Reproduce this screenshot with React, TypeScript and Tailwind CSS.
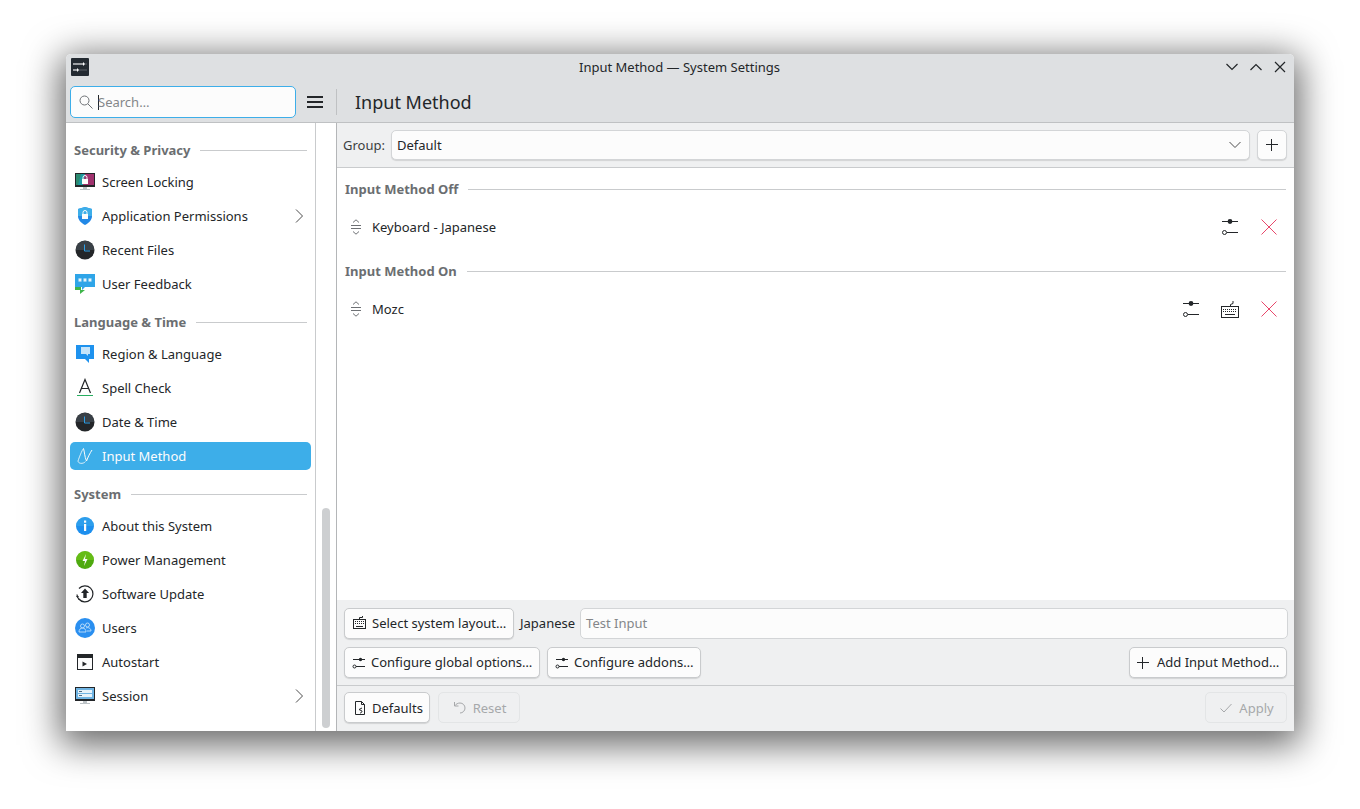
import type { ReactNode } from "react";

function Chevron() {
  return (
    <svg width="16" height="16" viewBox="0 0 16 16" className="text-[#4d4d4d]">
      <path d="M5 1.500 11.500 8 5 14.500" fill="none" stroke="currentColor" />
    </svg>
  );
}

function ClockIcon() {
  return (
    <svg width="20" height="20" viewBox="0 0 20 20">
      <circle cx="10" cy="10" r="9.500" fill="#232629" />
      <path d="M.8 10a9.200 9.200 0 0 1 18.400 0" fill="#4d5560" opacity=".55" />
      <path d="M9.500 4.500v6.500H15" fill="none" stroke="#2e9fe6" strokeWidth="1" />
    </svg>
  );
}

function Monitor({ children }: { children: ReactNode }) {
  return (
    <svg width="20" height="20" viewBox="0 0 20 20">
      <g transform="translate(0 1)">
        <rect x="0" y="0" width="20" height="14" fill="#232629" />
        {children}
        <rect x="8" y="14" width="4" height="2" fill="#bdc3c7" />
        <rect x="5" y="16" width="10" height="1" fill="#bdc3c7" />
      </g>
    </svg>
  );
}

function ScreenLockIcon() {
  return (
    <Monitor>
      <rect x="1" y="1" width="18" height="11" fill="#1d99a0" />
      <path d="M10 1h9v11H8z" fill="#a0326e" />
      <path d="M1 1h5l-3 11H1z" fill="#2a8a70" />
      <rect x="7" y="6" width="6" height="5" fill="#fcfcfc" />
      <path d="M8 6V4.500a2 2 0 0 1 4 0V6" fill="none" stroke="#fcfcfc" />
    </Monitor>
  );
}

function ShieldIcon() {
  return (
    <svg width="20" height="20" viewBox="0 0 20 20">
      <path d="M10 1 3 3v7c0 4 3 7 7 9 4-2 7-5 7-9V3z" fill="#2288e6" />
      <path d="M10 1 3 3v7h14V3z" fill="#3daee9" />
      <rect x="7" y="8" width="6" height="5" fill="#fcfcfc" />
      <path d="M8 8V6.500a2 2 0 0 1 4 0V8" fill="none" stroke="#fcfcfc" />
    </svg>
  );
}

function FeedbackIcon() {
  return (
    <svg width="20" height="20" viewBox="0 0 20 20">
      <path d="M0 3h6v13h4l-5 4v-4H0z" fill="#3fb54a" />
      <path d="M0 0h20v13H10l-3 3v-3H0z" fill="#2fa5e8" />
      <path d="M5 4v4M3.300 5l3.400 2M3.300 7l3.400-2M10 4v4M8.300 5l3.400 2M8.300 7l3.400-2M15 4v4M13.300 5l3.400 2M13.300 7l3.400-2" stroke="#fcfcfc" fill="none" />
    </svg>
  );
}

function RegionIcon() {
  return (
    <svg width="20" height="20" viewBox="0 0 20 20">
      <path d="M1 1h18v14h-5v4l-4-4H1z" fill="#1e92ee" />
      <path d="M6 3h9v7h-2v2l-2-2H6z" fill="#c5e4fa" />
    </svg>
  );
}

function SpellIcon() {
  return (
    <svg width="20" height="20" viewBox="0 0 20 20">
      <path d="M4.500 15 10 1.500 15.500 15M6.500 10.500h7" fill="none" stroke="#232629" strokeWidth="1.200" />
      <rect x="2" y="17" width="16" height="1" fill="#27ae60" />
    </svg>
  );
}

function InputMethodIcon() {
  return (
    <svg width="20" height="20" viewBox="0 0 20 20" fill="none" stroke="#fcfcfc" strokeWidth="1">
      <path d="M8.500 2.500C7 4 4 12 3 15c0 2.500 5 3.500 7.500.5" opacity=".8" />
      <path d="M8.500 2.500c1 3 1 8 3 12.500M17 4c-2 3-4 7-5.500 11" />
    </svg>
  );
}

function InfoIcon() {
  return (
    <svg width="20" height="20" viewBox="0 0 20 20">
      <circle cx="10" cy="10" r="9" fill="#1d8fee" />
      <path d="M1 10a9 9 0 0 1 18 0" fill="#3daee9" opacity=".5" />
      <rect x="9" y="8" width="2.200" height="7" fill="#fcfcfc" />
      <rect x="9" y="4.500" width="2.200" height="2.200" fill="#fcfcfc" />
    </svg>
  );
}

function PowerIcon() {
  return (
    <svg width="20" height="20" viewBox="0 0 20 20">
      <circle cx="10" cy="10" r="9" fill="#4ea90f" />
      <path d="M1 10a9 9 0 0 1 18 0" fill="#7ccf1e" opacity=".5" />
      <path d="M11 4 7.500 11H10l-1 5 3.500-7H10z" fill="#fcfcfc" />
    </svg>
  );
}

function UpdateIcon() {
  return (
    <svg width="20" height="20" viewBox="0 0 20 20">
      <path d="M4 4.500A8 8 0 1 1 3.800 15" fill="none" stroke="#232629" strokeWidth="1.200" />
      <path d="M2 10.500a8 8 0 0 0 2 5" fill="none" stroke="#232629" strokeWidth="1.200" />
      <path d="M1 12h3l-1.500 2z" fill="#232629" />
      <path d="M10 4.500 14 9h-2.300v5H8.300V9H6z" fill="#232629" />
    </svg>
  );
}

function UsersIcon() {
  return (
    <svg width="20" height="20" viewBox="0 0 20 20">
      <circle cx="10" cy="10" r="10" fill="#2a8ff0" />
      <g fill="none" stroke="#bfe0fb" strokeWidth=".9">
        <circle cx="7.500" cy="8" r="2" />
        <circle cx="12.500" cy="7" r="2" />
        <path d="M4 14c0-2.500 1.500-4 3.500-4S11 11.500 11 14z" />
        <path d="M11 10c2-1 5 0 5 3h-4" />
      </g>
    </svg>
  );
}

function AutostartIcon() {
  return (
    <svg width="20" height="20" viewBox="0 0 20 20">
      <rect x="2.500" y="2.500" width="15" height="15" fill="#fcfcfc" stroke="#232629" />
      <rect x="2" y="2" width="16" height="4" fill="#232629" />
      <path d="M7.500 9.500v5l4.500-2.500z" fill="#232629" />
    </svg>
  );
}

function SessionIcon() {
  return (
    <Monitor>
      <rect x="1" y="1" width="18" height="11" fill="#6fb4e3" />
      <rect x="3" y="3" width="14" height="3" fill="#e6f2fa" />
      <rect x="3" y="7" width="14" height="3" fill="#e6f2fa" />
      <rect x="4" y="4" width="3" height="1" fill="#4d6a80" />
      <rect x="4" y="8" width="3" height="1" fill="#4d6a80" />
    </Monitor>
  );
}

function KeyboardIcon() {
  return (
    <svg width="18" height="18" viewBox="0 0 18 18" fill="none" stroke="#232629">
      <path d="M9.500 6V4.500l2.500-1V1" />
      <rect x=".5" y="6.500" width="17" height="11" />
      <path d="M2 9.500h14M2 11.500h14" strokeDasharray="1 1" />
      <path d="M4 14.500h10" />
    </svg>
  );
}

function KeyboardSmall() {
  return (
    <svg width="15" height="15" viewBox="0 0 15 15" fill="none" stroke="#232629">
      <path d="M7.500 3V1.500h3V0" />
      <rect x="1.500" y="3.500" width="12" height="9" />
      <path d="M3 5.500h9M3 7.500h9" strokeDasharray="1 1" />
      <path d="M4 10.500h7" />
    </svg>
  );
}

function SlidersIcon() {
  return (
    <svg width="16" height="16" viewBox="0 0 16 16" fill="none" stroke="#232629">
      <path d="M0 2.500h16M5 13.500h11" />
      <circle cx="8" cy="2.500" r="2.400" fill="#232629" stroke="none" />
      <circle cx="2.500" cy="13.500" r="2" fill="#fcfcfc" />
    </svg>
  );
}

function SmallSliders() {
  return (
    <svg width="16" height="16" viewBox="0 0 16 16" fill="none" stroke="#232629">
      <path d="M2 4.500h12M5 11.500h9" />
      <circle cx="9.500" cy="4.500" r="1.700" fill="#232629" stroke="none" />
      <circle cx="3.500" cy="11.500" r="1.500" fill="#fcfcfc" />
    </svg>
  );
}

function RemoveIcon() {
  return (
    <svg width="16" height="16" viewBox="0 0 16 16">
      <path d="M.5.500l15 15M15.500.500l-15 15" fill="none" stroke="#e8476a" />
    </svg>
  );
}

function DragHandle() {
  return (
    <svg width="12" height="16" viewBox="0 0 12 16" fill="none" stroke="#6e7175">
      <path d="M3 3.500 6 .8l3 2.700M1 6.500h10M1 9.500h10M3 12.500l3 2.700 3-2.700" />
    </svg>
  );
}

function PlusIcon() {
  return (
    <svg width="12" height="12" viewBox="0 0 12 12">
      <path d="M5.500 0v12M0 5.500h12" stroke="#232629" fill="none" />
    </svg>
  );
}

type Item = { label: string; icon: ReactNode; arrow?: boolean; active?: boolean };

const sections: { title: string; items: Item[] }[] = [
  {
    title: "Security & Privacy",
    items: [
      { label: "Screen Locking", icon: <ScreenLockIcon /> },
      { label: "Application Permissions", icon: <ShieldIcon />, arrow: true },
      { label: "Recent Files", icon: <ClockIcon /> },
      { label: "User Feedback", icon: <FeedbackIcon /> },
    ],
  },
  {
    title: "Language & Time",
    items: [
      { label: "Region & Language", icon: <RegionIcon /> },
      { label: "Spell Check", icon: <SpellIcon /> },
      { label: "Date & Time", icon: <ClockIcon /> },
      { label: "Input Method", icon: <InputMethodIcon />, active: true },
    ],
  },
  {
    title: "System",
    items: [
      { label: "About this System", icon: <InfoIcon /> },
      { label: "Power Management", icon: <PowerIcon /> },
      { label: "Software Update", icon: <UpdateIcon /> },
      { label: "Users", icon: <UsersIcon /> },
      { label: "Autostart", icon: <AutostartIcon /> },
      { label: "Session", icon: <SessionIcon />, arrow: true },
    ],
  },
];

function Button({ children, className = "" }: { children: ReactNode; className?: string }) {
  return (
    <div className={`h-[31px] flex items-center whitespace-nowrap bg-[#fcfcfc] border border-[#c9cbcd] rounded-[5px] shadow-[0_1px_1px_rgba(0,0,0,0.12)] ${className}`}>
      {children}
    </div>
  );
}

function DisabledButton({ children, className = "" }: { children: ReactNode; className?: string }) {
  return (
    <div className={`h-[31px] flex items-center justify-center gap-[6px] pl-px border border-[#e3e5e6] rounded-[5px] text-[#a6a8aa] ${className}`}>
      {children}
    </div>
  );
}

function SectionLine({ title, className = "" }: { title: string; className?: string }) {
  return (
    <div className={`flex items-center gap-[10px] font-bold text-[#6b6e71] ${className}`}>
      <span>{title}</span>
      <div className="flex-1 h-px bg-[#c9cbcd] mb-[2px]" />
    </div>
  );
}

export default function App() {
  return (
    <div className="w-[1360px] h-[809px] overflow-hidden bg-white pt-[54px] pl-[66px] font-['Noto_Sans',sans-serif] text-[13px] text-[#232629]">
      <div className="w-[1228px] h-[677px] flex flex-col bg-white rounded-t-[5px] shadow-[0_8px_36px_6px_rgba(0,0,0,0.6)]">
        {/* title bar + toolbar */}
        <div className="h-[69px] bg-[#dee0e2] border-b border-[#bfc1c3] rounded-t-[5px] flex flex-col shrink-0">
          <div className="h-[28px] grid grid-cols-[1fr_auto_1fr] items-center pb-px pl-[5px] pr-[6px]">
            <svg width="18" height="18" viewBox="0 0 18 18" className="-mt-px">
              <rect width="18" height="18" rx="1" fill="#232a31" />
              <path d="M2 6h14M2 12h14" stroke="#6a7076" strokeWidth=".8" />
              <path d="M2 6h10M2 12h4" stroke="#fcfcfc" />
              <path d="m12 4 2 2-2 2zM6 10l2 2-2 2z" fill="#fcfcfc" />
            </svg>
            <div>Input Method — System Settings</div>
            <div className="flex items-center justify-end gap-[8px] -mt-px">
              <svg width="16" height="16" viewBox="0 0 16 16" fill="none" stroke="#232629" strokeWidth="1.200">
                <path d="m2.500 5 5.500 5.500L13.500 5" />
              </svg>
              <svg width="16" height="16" viewBox="0 0 16 16" fill="none" stroke="#232629" strokeWidth="1.200">
                <path d="m2.500 11 5.500-5.500 5.500 5.500" />
              </svg>
              <svg width="16" height="16" viewBox="0 0 16 16" fill="none" stroke="#232629" strokeWidth="1.200">
                <path d="m3 3 10 10M13 3 3 13" />
              </svg>
            </div>
          </div>
          <div className="flex items-center h-[40px] pl-[4px]">
            <div className="w-[226px] h-[32px] flex items-center bg-[#fcfcfc] border border-[#3daee9] rounded-[5px] pl-[8px]">
              <svg width="14" height="14" viewBox="0 0 14 14" fill="none" stroke="#6e7175" className="shrink-0">
                <circle cx="5.500" cy="5.500" r="4.500" />
                <path d="m9 9 4.500 4.500" />
              </svg>
              <div className="w-px h-[15px] bg-[#232629] ml-[5px] -mr-px shrink-0" />
              <span className="pt-px text-[#84878a]">Search…</span>
            </div>
            <div className="w-[38px] flex justify-center">
              <div className="w-[16px] h-[12px] flex flex-col justify-between">
                <div className="h-[2px] bg-[#232629]" />
                <div className="h-[2px] bg-[#232629]" />
                <div className="h-[2px] bg-[#232629]" />
              </div>
            </div>
            <div className="w-px h-[26px] bg-[#bfc1c3] ml-[2px]" />
            <div className="ml-[18px] text-[18px] leading-[24px]">Input Method</div>
          </div>
        </div>

        <div className="flex-1 flex min-h-0">
          {/* sidebar */}
          <div className="w-[249px] pt-[6px] border-r border-[#c9cbcd] box-content shrink-0 overflow-hidden">
            {sections.map((s) => (
              <div key={s.title}>
                <SectionLine title={s.title} className="h-[36px] pt-[8px] px-[8px]" />
                {s.items.map((it) => (
                  <div key={it.label} className="h-[34px] py-[3px] px-[4px]">
                    <div className={`h-[28px] flex items-center rounded-[5px] pl-[5px] pr-[4px] ${it.active ? "bg-[#3daee9] text-[#fcfcfc]" : ""}`}>
                      <div className="w-[20px] h-[20px] shrink-0">{it.icon}</div>
                      <span className="ml-[7px] pt-px flex-1">{it.label}</span>
                      {it.arrow && <Chevron />}
                    </div>
                  </div>
                ))}
              </div>
            ))}
          </div>
          {/* scrollbar column */}
          <div className="w-[20px] border-r border-[#b4b6b8] box-content shrink-0 flex justify-center pt-[385px] pb-[3px]">
            <div className="w-[8px] h-full bg-[#cdcfd1] rounded-full" />
          </div>

          {/* main */}
          <div className="flex-1 flex flex-col min-w-0">
            <div className="h-[45px] bg-[#eff0f1] border-b border-[#c9cbcd] flex items-center gap-[6px] pl-[6px] pr-[7px] shrink-0">
              <span className="w-[42px] pt-px text-[#3b3e41]">Group:</span>
              <div className="flex-1 h-[30px] flex items-center justify-between bg-[#fcfcfc] border border-[#d3d5d7] rounded-[5px] pl-[5px] pr-[8px] shadow-[0_1px_1px_rgba(0,0,0,0.12)]">
                <span className="pt-px">Default</span>
                <svg width="12" height="12" viewBox="0 0 12 12" fill="none" stroke="#4d4d4d">
                  <path d="m.5 3 5.500 5.500L11.500 3" />
                </svg>
              </div>
              <div className="w-[30px] h-[30px] flex items-center justify-center bg-[#fcfcfc] border border-[#d3d5d7] rounded-[5px] ml-px shadow-[0_1px_1px_rgba(0,0,0,0.12)]">
                <PlusIcon />
              </div>
            </div>

            <div className="flex-1 bg-white px-[8px]">
              <SectionLine title="Input Method Off" className="h-[44px]" />
              <div className="h-[38px] flex items-center -mt-[4px] pl-[5px] pr-[9px]">
                <DragHandle />
                <span className="ml-[10px] pt-px flex-1">Keyboard - Japanese</span>
                <SlidersIcon />
                <div className="ml-[23px]"><RemoveIcon /></div>
              </div>
              <SectionLine title="Input Method On" className="h-[44px] mt-[4px]" />
              <div className="h-[38px] flex items-center -mt-[4px] pl-[5px] pr-[9px]">
                <DragHandle />
                <span className="ml-[10px] pt-px flex-1">Mozc</span>
                <SlidersIcon />
                <div className="ml-[22px]"><KeyboardIcon /></div>
                <div className="ml-[22px]"><RemoveIcon /></div>
              </div>
            </div>

            <div className="h-[86px] bg-[#eff0f1] border-b border-[#c9cbcd] shrink-0 flex flex-col gap-[8px] pt-[8px] pl-[7px] pr-[7px]">
              <div className="flex items-center -mr-px">
                <Button className="w-[170px] pl-[7px] gap-[5px]">
                  <KeyboardSmall />
                  <span>Select system layout…</span>
                </Button>
                <span className="ml-[6px]">Japanese</span>
                <div className="ml-[5px] flex-1 h-[31px] flex items-center bg-[#fcfcfc] border border-[#d3d5d7] rounded-[5px] pl-[5px] text-[#84878a]">Test Input</div>
              </div>
              <div className="flex items-center gap-[7px]">
                <Button className="w-[196px] pl-[6px] gap-[4px]">
                  <SmallSliders />
                  <span>Configure global options…</span>
                </Button>
                <Button className="w-[154px] pl-[6px] gap-[4px]">
                  <SmallSliders />
                  <span>Configure addons…</span>
                </Button>
                <Button className="ml-auto w-[158px] pl-[7px] gap-[8px]">
                  <PlusIcon />
                  <span>Add Input Method…</span>
                </Button>
              </div>
            </div>

            <div className="h-[45px] bg-[#eff0f1] flex items-center gap-[8px] pl-[7px] pr-[7px] pb-[2px] shrink-0">
              <Button className="w-[86px] pl-[7px] gap-[4px]">
                <svg width="16" height="16" viewBox="0 0 16 16" fill="none" stroke="#232629">
                  <path d="M3.500 1.500h6l3 3v10h-9zM9.500 1.500v3h3" />
                  <path d="M10 8 7 9.500l3 1.500c0 1-.5 2-2 2" />
                </svg>
                <span className="pt-[2px]">Defaults</span>
              </Button>
              <DisabledButton className="w-[82px]">
                <svg width="14" height="14" viewBox="0 0 14 14" fill="none" stroke="#a6a8aa">
                  <path d="M1.500 1v4h4M1.500 5C3 3 5 2 7 2a5 5 0 0 1 0 10" />
                </svg>
                <span className="pt-[2px]">Reset</span>
              </DisabledButton>
              <DisabledButton className="ml-auto w-[82px]">
                <svg width="14" height="14" viewBox="0 0 14 14" fill="none" stroke="#a6a8aa">
                  <path d="m1.500 7.500 3.500 3.500 7.500-8" />
                </svg>
                <span className="pt-[2px]">Apply</span>
              </DisabledButton>
            </div>
          </div>
        </div>
      </div>
    </div>
  );
}
